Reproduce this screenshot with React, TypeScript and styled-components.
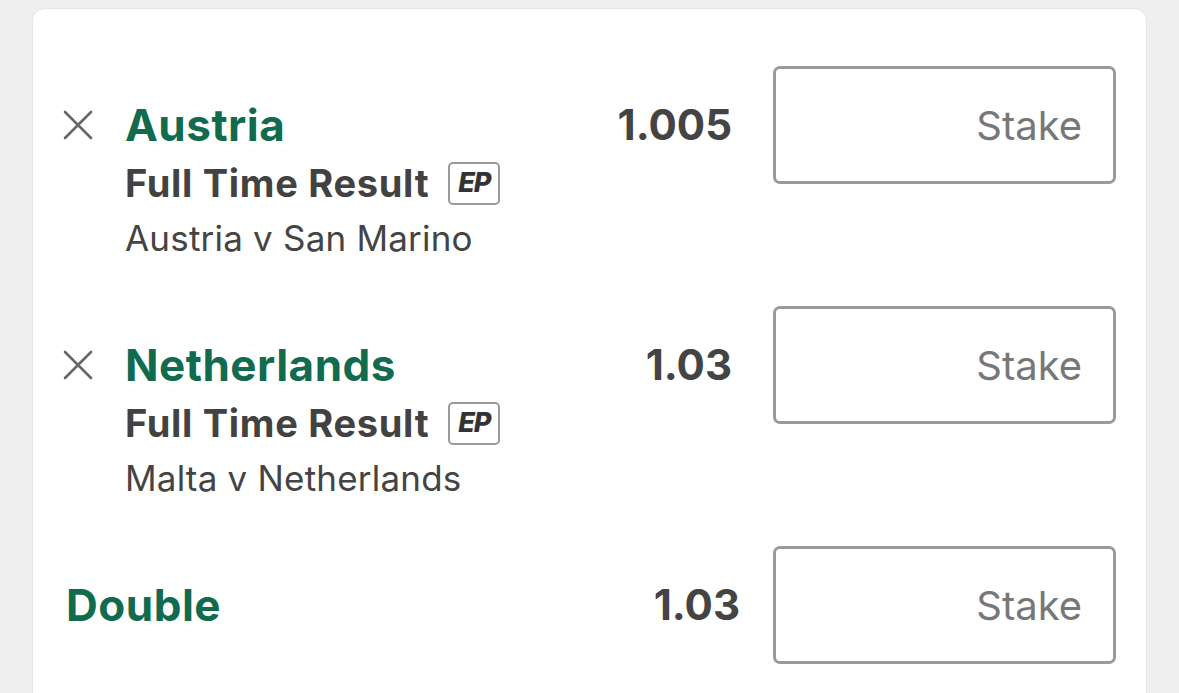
import styled, { createGlobalStyle } from "styled-components";

interface Selection {
  id: string;
  name: string;
  market?: string;
  event?: string;
  odds: string;
  removable: boolean;
}

const selections: Selection[] = [
  {
    id: "aut",
    name: "Austria",
    market: "Full Time Result",
    event: "Austria v San Marino",
    odds: "1.005",
    removable: true,
  },
  {
    id: "ned",
    name: "Netherlands",
    market: "Full Time Result",
    event: "Malta v Netherlands",
    odds: "1.03",
    removable: true,
  },
  { id: "dbl", name: "Double", odds: "1.03", removable: false },
];

const GlobalStyle = createGlobalStyle`
  html, body {
    margin: 0;
    padding: 0;
    background: #efefef;
    font-family: Inter, "Noto Sans", sans-serif;
    overflow: hidden;
  }
`;

const Page = styled.div`
  padding: 9px 33px 0 33px;
  height: 693px;
  box-sizing: border-box;
`;

const Slip = styled.div`
  background: #fff;
  border-radius: 12px;
  box-shadow: 0 0 0 1px #e5e5e5;
  padding: 57px 30px 40px 30px;
  display: flex;
  flex-flow: column;
  gap: 47px;
`;

const Row = styled.div`
  display: flex;
  align-items: flex-start;
`;

const RemoveButton = styled.button`
  width: 62px;
  flex: none;
  margin-top: 44px;
  padding: 0;
  border: 0;
  background: none;
  display: flex;
  justify-content: flex-start;
  cursor: pointer;
`;

const Info = styled.div<{ $indent: number }>`
  flex: 1;
  padding-left: ${(p) => p.$indent}px;
  display: flex;
  flex-flow: column;
  margin-top: 33px;
`;

const Name = styled.div`
  font-size: 44px;
  line-height: 52px;
  font-weight: 700;
  letter-spacing: 0.5px;
  color: #116b4e;
`;

const Market = styled.div`
  margin-top: 9px;
  display: flex;
  align-items: center;
  gap: 19px;
  font-size: 38px;
  line-height: 46px;
  font-weight: 700;
  letter-spacing: 0.7px;
  color: #424242;
`;

const EachWay = styled.span`
  box-sizing: border-box;
  width: 52px;
  height: 43px;
  border: 2px solid #9a9a9a;
  border-radius: 5px;
  display: flex;
  align-items: center;
  justify-content: center;
  font-size: 27px;
  font-weight: 800;
  font-style: italic;
  color: #333;
  letter-spacing: -1px;
`;

const Event = styled.div`
  margin-top: 11px;
  font-size: 35px;
  line-height: 42px;
  letter-spacing: 0.2px;
  color: #444;
`;

const Odds = styled.div<{ $gap: number }>`
  margin-top: 33px;
  margin-right: ${(p) => p.$gap}px;
  font-size: 42px;
  line-height: 52px;
  font-weight: 700;
  color: #444;
`;

const StakeInput = styled.input`
  box-sizing: border-box;
  width: 343px;
  height: 118px;
  flex: none;
  border: 3px solid #9a9a9a;
  border-radius: 7px;
  padding: 0 31px 0 16px;
  font-family: inherit;
  font-size: 40px;
  color: #333;
  text-align: right;
  outline: none;
  background: #fff;

  &::placeholder {
    color: #777;
  }
`;

const CloseIcon = () => (
  <svg width="30" height="30" viewBox="0 0 30 30">
    <path
      d="M2 2 L28 28 M28 2 L2 28"
      stroke="#666"
      strokeWidth="2.6"
      strokeLinecap="round"
      fill="none"
    />
  </svg>
);

export default function App() {
  return (
    <>
      <GlobalStyle />
      <Page>
        <Slip>
          {selections.map((s) => (
            <Row key={s.id}>
              {s.removable && (
                <RemoveButton aria-label={`Remove ${s.name}`}>
                  <CloseIcon />
                </RemoveButton>
              )}
              <Info $indent={s.removable ? 0 : 3}>
                <Name>{s.name}</Name>
                {s.market && (
                  <Market>
                    {s.market}
                    <EachWay>EP</EachWay>
                  </Market>
                )}
                {s.event && <Event>{s.event}</Event>}
              </Info>
              <Odds $gap={s.removable ? 41 : 33}>{s.odds}</Odds>
              <StakeInput placeholder="Stake" />
            </Row>
          ))}
        </Slip>
      </Page>
    </>
  );
}
